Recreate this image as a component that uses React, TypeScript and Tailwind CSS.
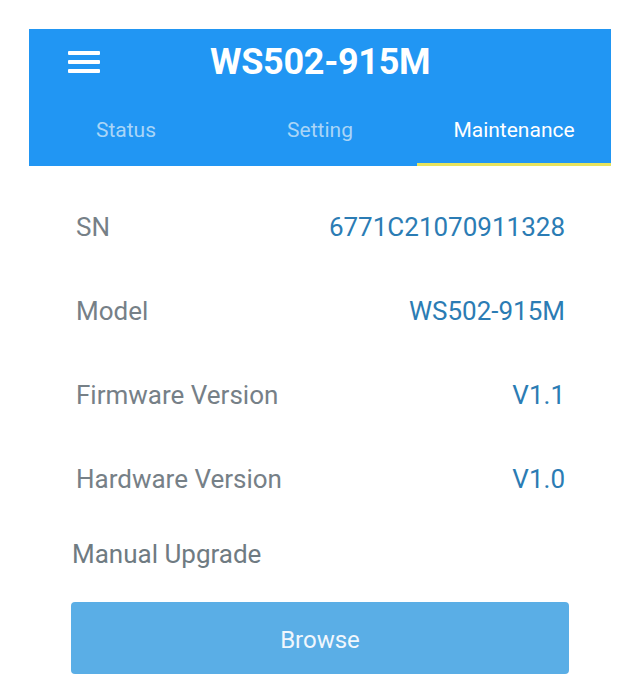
import React from "react";

const rows: [string, string][] = [
  ["SN", "6771C21070911328"],
  ["Model", "WS502-915M"],
  ["Firmware Version", "V1.1"],
  ["Hardware Version", "V1.0"],
];

export default function App() {
  return (
    <div
      className="w-[635px] h-[692px] bg-white overflow-hidden pt-[29px]"
      style={{ fontFamily: "Roboto, 'Liberation Sans', sans-serif" }}
    >
      <div className="ml-[29px] w-[582px]">
        <div className="bg-[#2196f3] h-[137px] flex flex-col">
          <div className="relative h-[65px] flex items-center">
            <div className="ml-[39px] flex flex-col gap-[5px]">
              <span className="block w-[32px] h-[4px] bg-white rounded-[1px]" />
              <span className="block w-[32px] h-[4px] bg-white rounded-[1px]" />
              <span className="block w-[32px] h-[4px] bg-white rounded-[1px]" />
            </div>
            <div className="ml-[110px] text-white font-bold text-[36px] leading-none tracking-[-0.3px]">
              WS502-915M
            </div>
          </div>
          <div className="flex-1 grid grid-cols-3">
            <div className="flex items-center justify-center text-[21px] text-[#a9d5f7] pt-[2px]">Status</div>
            <div className="flex items-center justify-center text-[21px] text-[#a9d5f7] pt-[2px]">Setting</div>
            <div className="flex flex-col">
              <div className="flex-1 flex items-center justify-center text-[21px] text-white pt-[5px]">Maintenance</div>
              <div className="h-[3px] bg-[#e8e35c]" />
            </div>
          </div>
        </div>
        <div className="mt-[19px]">
          {rows.map(([k, v]) => (
            <div key={k} className="h-[84px] flex items-center justify-between pl-[47px] pr-[46px]">
              <span className="text-[26px] text-[#768087]">{k}</span>
              <span className="text-[26px] text-[#2b7cb4]">{v}</span>
            </div>
          ))}
          <div className="h-[66px] flex items-center pl-[43px] text-[26px] text-[#6f7b82]">
            Manual Upgrade
          </div>
          <button className="mt-[15px] ml-[42px] w-[498px] h-[72px] rounded-[4px] bg-[#5aaee6] text-[#f0f7fd] text-[24px] flex items-center justify-center pt-[4px]">
            Browse
          </button>
        </div>
      </div>
    </div>
  );
}
